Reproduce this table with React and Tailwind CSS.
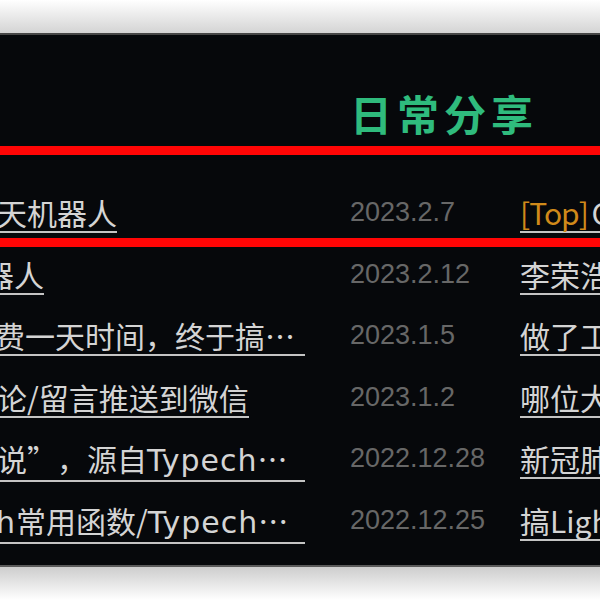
import React from "react";

const font = { fontFamily: "'Noto Sans CJK SC', 'Noto Sans', sans-serif" };
const lat = { fontFamily: "'DejaVu Sans', 'Noto Sans CJK SC', sans-serif" };

const L = ({ children }) => (
  <span className="tracking-[1px]" style={lat}>{children}</span>
);

const rows = [
  { left: <>天机器人</>, ml: "-ml-[3px]", maxw: "max-w-[308px]", date: "2023.2.7", right: <><span className="text-[#d08a1a] tracking-[-1px]">[Top]</span><span className="tracking-[-3px]"> </span>ChatGPT聊天机器人</> },
  { left: <>器人</>, ml: "-ml-[16px]", maxw: "max-w-[321px]", date: "2023.2.12", right: <>李荣浩新歌</> },
  { left: <>费一天时间，终于搞定了这个功能</>, ml: "-ml-[5px]", maxw: "max-w-[310px]", date: "2023.1.5", right: <>做了工具箱</> },
  { left: <>论/留言推送到微信</>, ml: "-ml-[3px]", maxw: "max-w-[308px]", date: "2023.1.2", right: <>哪位大佬</> },
  { left: <>说<span className="inline-block w-[30px]">”</span>，源自<L>Typecho</L>插件</>, ml: "-ml-[3px]", maxw: "max-w-[308px]", date: "2022.12.28", right: <>新冠肺炎</> },
  { left: <><L>h</L>常用函数/<L>Typecho</L>插件</>, ml: "-ml-[4px]", maxw: "max-w-[309px]", date: "2022.12.25", right: <>搞LightGallery</> },
];

export default function App() {
  return (
    <div className="w-[600px] h-[600px] flex flex-col bg-white overflow-hidden" style={font}>
      <div className="h-[33px] shrink-0 bg-gradient-to-b from-white to-[#d4d4d4]" />
      <div className="h-[2px] shrink-0 bg-[#464646]" />
      <div className="relative h-[530px] shrink-0 bg-[#06080b] overflow-hidden flex flex-col">
        <div className="pt-[57px] pl-[350px] h-[160px] shrink-0">
          <span className="block text-[42px] leading-[42px] font-bold tracking-[5px] text-[#2fbb7d]">日常分享</span>
        </div>
        <div className="flex flex-col">
          {rows.map((r, i) => (
            <div key={i} className="flex h-[61.6px] shrink-0 items-start">
              <div className="w-[350px] shrink-0 overflow-hidden whitespace-nowrap">
                <span className={`inline-block align-top ${r.ml} ${r.maxw} truncate text-[30px] leading-[34px] pb-[2px] border-b-2 border-[#c4c4c4] text-[#d4d4d4]`}>
                  {r.left}
                </span>
              </div>
              <div className="w-[170px] shrink-0 mt-[4px] text-[27px] leading-[27px] text-[#676767]" style={{ fontFamily: "'Liberation Sans', Arial, sans-serif" }}>
                {r.date}
              </div>
              <div className="flex-1 overflow-hidden whitespace-nowrap">
                <span className="inline-block align-top text-[30px] leading-[34px] pb-[2px] border-b-2 border-[#c4c4c4] text-[#d4d4d4]">
                  {r.right}
                </span>
              </div>
            </div>
          ))}
        </div>
        <div className="absolute left-0 right-0 top-[111px] h-[9px] bg-[#ff0505]" />
        <div className="absolute left-0 right-0 top-[203px] h-[9px] bg-[#ff0505]" />
      </div>
      <div className="h-[2px] shrink-0 bg-[#5a5a5a]" />
      <div className="flex-1 bg-gradient-to-b from-[#cdcdcd] to-white" />
    </div>
  );
}
